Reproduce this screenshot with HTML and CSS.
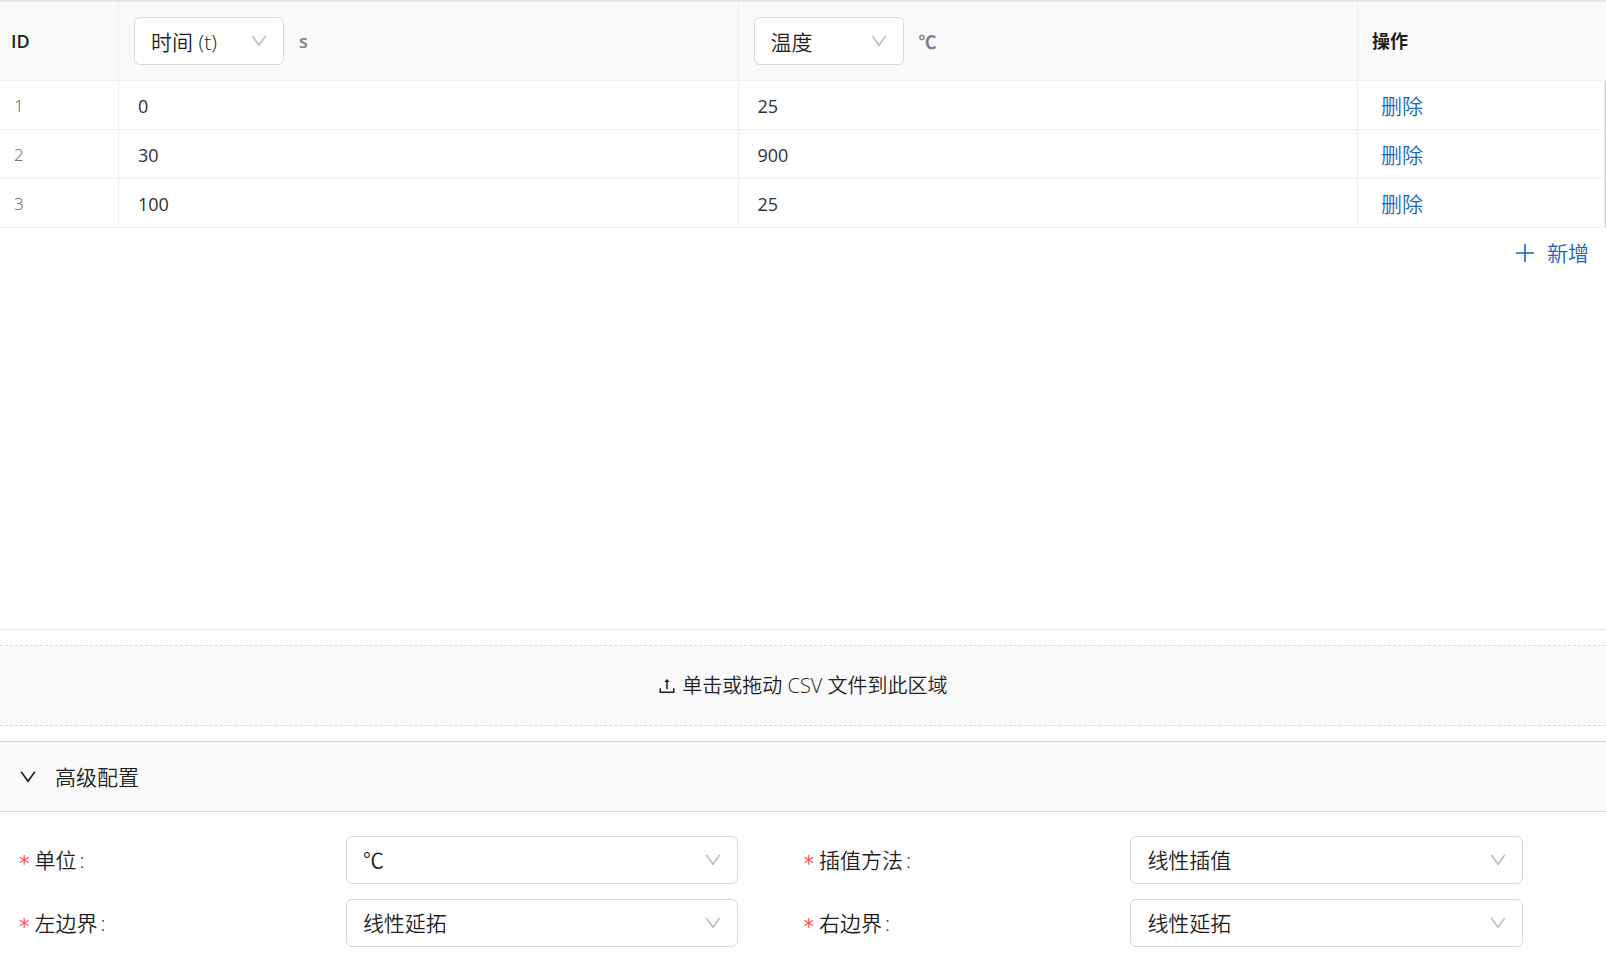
FILE: index.html
```html
<!DOCTYPE html>
<html lang="zh-CN">
<head>
<meta charset="utf-8">
<title>高级配置</title>
<link rel="stylesheet" href="styles.css">
</head>
<body>
<svg class="sprite" aria-hidden="true">
  <symbol id="down" viewBox="64 64 896 896"><path d="M884 256h-75c-5.100 0-9.900 2.500-12.900 6.600L512 654.200 227.900 262.600c-3-4.100-7.800-6.600-12.900-6.600h-75c-6.500 0-10.300 7.400-6.500 12.700l352.600 486.100c12.800 17.600 39 17.600 51.700 0l352.600-486.100c3.900-5.300.1-12.700-6.400-12.700z"/></symbol>
</svg>
<main class="page">
  <section class="table-area">
    <table class="points">
      <colgroup><col class="col-id"><col><col><col class="col-action"></colgroup>
      <thead>
        <tr>
          <th scope="col">ID</th>
          <th scope="col">
            <div class="head-field">
              <span class="select select-small">
                <select aria-label="变量"><option>时间 (t)</option></select>
                <svg class="icon"><use href="#down"/></svg>
              </span>
              <span class="unit">s</span>
            </div>
          </th>
          <th scope="col">
            <div class="head-field">
              <span class="select select-small">
                <select aria-label="物理量"><option>温度</option></select>
                <svg class="icon"><use href="#down"/></svg>
              </span>
              <span class="unit unit-bold">℃</span>
            </div>
          </th>
          <th scope="col">操作</th>
        </tr>
      </thead>
      <tbody>
        <tr><td>1</td><td>0</td><td>25</td><td><button class="link" type="button">删除</button></td></tr>
        <tr><td>2</td><td>30</td><td>900</td><td><button class="link" type="button">删除</button></td></tr>
        <tr><td>3</td><td>100</td><td>25</td><td><button class="link" type="button">删除</button></td></tr>
      </tbody>
    </table>
    <button class="link add" type="button">
      <svg class="icon" viewBox="0 0 18 18"><path d="M9 0v18M0 9h18" fill="none" stroke="currentColor" stroke-width="1.600"/></svg>
      <span>新增</span>
    </button>
  </section>

  <button class="upload" type="button">
    <svg class="icon" viewBox="64 64 896 896"><path d="M400 317.700h73.900V656c0 4.400 3.600 8 8 8h60c4.400 0 8-3.600 8-8V317.700H624c6.700 0 10.400-7.700 6.300-12.900L518.300 163a8 8 0 00-12.600 0l-112 141.700c-4.100 5.300-.4 13 6.300 13zM878 626h-60c-4.400 0-8 3.600-8 8v154H214V634c0-4.400-3.600-8-8-8h-60c-4.400 0-8 3.600-8 8v198c0 17.700 14.300 32 32 32h684c17.700 0 32-14.300 32-32V634c0-4.400-3.600-8-8-8z"/></svg>
    <span>单击或拖动 CSV 文件到此区域</span>
  </button>

  <section class="advanced">
    <button class="advanced-head" type="button" aria-expanded="true">
      <svg class="icon"><use href="#down"/></svg>
      <span>高级配置</span>
    </button>
    <form class="form">
      <div class="field">
        <label for="unit">单位<i>:</i></label>
        <span class="select"><select id="unit"><option>℃</option></select><svg class="icon"><use href="#down"/></svg></span>
      </div>
      <div class="field">
        <label for="method">插值方法<i>:</i></label>
        <span class="select"><select id="method"><option>线性插值</option></select><svg class="icon"><use href="#down"/></svg></span>
      </div>
      <div class="field">
        <label for="left">左边界<i>:</i></label>
        <span class="select"><select id="left"><option>线性延拓</option></select><svg class="icon"><use href="#down"/></svg></span>
      </div>
      <div class="field">
        <label for="right">右边界<i>:</i></label>
        <span class="select"><select id="right"><option>线性延拓</option></select><svg class="icon"><use href="#down"/></svg></span>
      </div>
    </form>
  </section>
</main>
</body>
</html>
```
FILE: styles.css
```css
* {
  box-sizing: border-box;
}

body {
  margin: 0;
  background: #fff;
  color: #1f1f1f;
  font: 350 21px/32px "Open Sans", "Noto Sans CJK SC", sans-serif;
}

button,
select {
  font: inherit;
  color: inherit;
}

button {
  margin: 0;
  padding: 0;
  border: 0;
  background: none;
  cursor: pointer;
}

.sprite {
  display: none;
}

.icon {
  flex: none;
  width: 18px;
  height: 18px;
  fill: currentColor;
}

.page {
  display: flex;
  flex-direction: column;
  gap: 15px;
  min-height: 100vh;
}

/* data table */
.table-area {
  display: flex;
  flex: 1;
  flex-direction: column;
  border-top: 2px solid #e6e9ec;
  border-bottom: 1px solid #e8e8e8;
}

.points {
  width: 100%;
  border-collapse: separate;
  border-spacing: 0;
  table-layout: fixed;
}

.col-id {
  width: 119px;
}

.col-action {
  width: 248px;
}

.points th {
  height: 79px;
  padding: 0 15px;
  border-right: 1px solid #f0f0f0;
  border-bottom: 1px solid #f0f0f0;
  background: #fafafa;
  font-size: 18px;
  font-weight: 600;
  text-align: left;
}

.points th:first-child {
  padding-left: 11px;
}

.points th:last-child {
  padding-left: 14px;
  border-right: 0;
  font-weight: 700;
}

.points td {
  height: 49px;
  padding: 2px 19px 0;
  border-right: 1px solid #f0f0f0;
  border-bottom: 1px solid #f0f0f0;
  color: #303030;
  font-size: 18px;
  font-weight: 400;
}

.points td:first-child {
  padding: 1px 14px 0;
  color: #595959;
  font-size: 17px;
  font-weight: 350;
}

.points td:last-child {
  padding-left: 23px;
  border-right-color: #ccc;
  box-shadow: inset -1px 0 #f0f0f0;
}

.head-field {
  display: flex;
  align-items: center;
  gap: 15px;
}

.unit {
  color: #7f7f7f;
}

.unit-bold {
  font-family: "Noto Sans CJK SC", sans-serif;
  font-weight: 700;
}

.link {
  display: block;
  color: #1668b8;
  font-size: 21px;
  font-weight: 350;
}

.add {
  display: flex;
  align-items: center;
  align-self: flex-end;
  gap: 13px;
  margin: 9px 17px;
}

/* select */
.select {
  position: relative;
  display: block;
  font-size: 21px;
  font-weight: 350;
}

.select-small {
  width: 150px;
}

.select select {
  display: block;
  width: 100%;
  height: 48px;
  padding: 0 40px 0 16px;
  border: 1px solid #d9d9d9;
  border-radius: 6px;
  background: #fff;
  appearance: none;
}

.select-small select {
  padding-top: 2px;
}

.select .icon {
  position: absolute;
  top: 15px;
  right: 16px;
  color: #bfbfbf;
  pointer-events: none;
}

/* upload */
.upload {
  display: flex;
  align-items: center;
  justify-content: center;
  gap: 6px;
  height: 81px;
  border-top: 1px dashed #d9d9d9;
  border-bottom: 1px dashed #d9d9d9;
  background: #fafafa;
  font-size: 20px;
}

/* advanced settings */
.advanced-head {
  display: flex;
  align-items: center;
  gap: 18px;
  width: 100%;
  height: 71px;
  padding: 0 19px;
  border-top: 1px solid #d9d9d9;
  border-bottom: 1px solid #d9d9d9;
  background: #fafafa;
}

.form {
  display: grid;
  grid-template-columns: 1fr 1fr;
  row-gap: 15px;
  padding: 24px 18px 17px 19px;
}

.field {
  display: grid;
  grid-template-columns: 10fr 12fr 2fr;
  align-items: center;
}

.field label::before {
  content: "*";
  margin-right: 5px;
  color: #ff4d4f;
  font-family: "DejaVu Sans", sans-serif;
  font-weight: 400;
  line-height: 1;
  vertical-align: -3px;
}

.field label i {
  margin-left: 3px;
  font-style: normal;
}
```
